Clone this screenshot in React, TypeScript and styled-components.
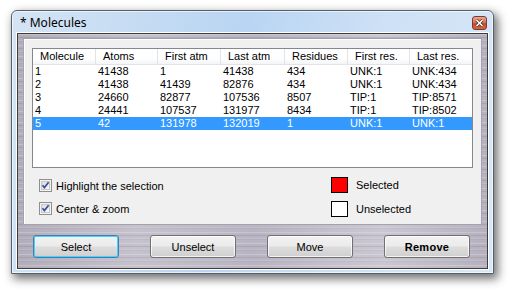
import React from 'react';
import styled, { createGlobalStyle, css } from 'styled-components';

const GlobalStyle = createGlobalStyle`
  html, body {
    margin: 0;
    padding: 0;
    background: #ffffff;
  }
  body {
    font-family: "Liberation Sans", Arial, sans-serif;
    font-size: 11px;
    color: #000;
  }
`;

const Stage = styled.div`
  width: 509px;
  height: 290px;
  padding: 10px 0 0 11px;
  box-sizing: border-box;
  overflow: hidden;
`;

const Window = styled.div`
  width: 483px;
  height: 264px;
  box-sizing: border-box;
  border: 1px solid #55606c;
  border-radius: 6px 6px 0 0;
  background: linear-gradient(100deg, #d4e4f5 0%, #c3daf2 28%, #b9d5f3 45%, #cde0f5 70%, #d8e7f7 100%);
  box-shadow: 3px 4px 10px 1px rgba(0, 0, 0, 0.55), inset 0 0 0 1px rgba(255, 255, 255, 0.6);
  padding: 0 5px 4px 5px;
  display: flex;
  flex-direction: column;
`;

const TitleBar = styled.div`
  height: 22px;
  display: flex;
  align-items: center;
  justify-content: space-between;
  padding: 0 1px 0 3px;
`;

const Title = styled.span`
  font-family: "Noto Sans", "Open Sans", sans-serif;
  font-size: 12px;
  color: #000;
  margin-top: 1px;
`;

const CloseButton = styled.div`
  width: 15px;
  height: 14px;
  margin-top: 2px;
  box-sizing: border-box;
  border: 1px solid #7a3c30;
  border-radius: 3px;
  background: linear-gradient(180deg, #eaa48f 0%, #d8765c 45%, #c24a2c 55%, #d2693f 100%);
  display: flex;
  align-items: center;
  justify-content: center;
`;

// brushed metal client area
const ClientEdge = styled.div`
  flex: 1;
  border: 1px solid #3c3c3c;
  box-shadow: 0 0 0 1px #ffffff;
  background:
    repeating-linear-gradient(180deg, rgba(255,255,255,0.22) 0 1px, transparent 1px 3px, rgba(60,50,80,0.12) 3px 4px, transparent 4px 6px, rgba(255,255,255,0.12) 6px 7px, rgba(70,60,90,0.06) 7px 8px, transparent 8px 11px),
    linear-gradient(90deg, #b1adba 0%, #c6c2cd 25%, #b8b4c2 50%, #cbc7d2 78%, #b5b1be 100%);
  padding: 4px 5px 0 5px;
  display: flex;
  flex-direction: column;
`;

const GroupPanel = styled.div`
  height: 187px;
  box-sizing: border-box;
  background: #f0f0f0;
  border: 1px solid #a4a2aa;
  box-shadow: inset 1px 1px 0 #ffffff;
  padding: 9px 8px 0 8px;
  display: flex;
  flex-direction: column;
`;

const ListBox = styled.div`
  height: 120px;
  box-sizing: border-box;
  background: #ffffff;
  border: 1px solid #828790;
`;

const gridCols = css`
  display: grid;
  grid-template-columns: 63px 62px 63px 64px 63px 62px 1fr;
`;

const HeaderRow = styled.div`
  ${gridCols};
  height: 16px;
  box-sizing: border-box;
  border-bottom: 1px solid #e2e3e6;
  background: linear-gradient(180deg, #ffffff 0%, #ffffff 60%, #f4f5f7 100%);
`;

const HeaderCell = styled.div`
  padding-left: 7px;
  line-height: 15px;
  border-right: 1px solid #e2e3e6;
  white-space: nowrap;
  overflow: hidden;
  &:last-child {
    border-right: none;
  }
`;

const DataRow = styled.div<{ $selected?: boolean }>`
  ${gridCols};
  height: 13px;
  line-height: 13px;
  background: ${(p) => (p.$selected ? '#3399ff' : 'transparent')};
  color: ${(p) => (p.$selected ? '#ffffff' : '#000000')};
  &:first-of-type {
    margin-top: 1px;
  }
`;

const DataCell = styled.div`
  padding-left: 2px;
  white-space: nowrap;
  overflow: hidden;
`;

const Options = styled.div`
  display: flex;
  padding: 9px 0 0 7px;
`;

const CheckColumn = styled.div`
  width: 292px;
  display: flex;
  flex-direction: column;
  gap: 10px;
  padding-top: 2px;
`;

const CheckRow = styled.label`
  display: flex;
  align-items: center;
  gap: 4px;
  height: 13px;
`;

const Legend = styled.div`
  display: flex;
  flex-direction: column;
  gap: 8px;
`;

const LegendRow = styled.div`
  display: flex;
  align-items: center;
  gap: 8px;
`;

const Swatch = styled.div<{ $color: string }>`
  width: 17px;
  height: 16px;
  box-sizing: border-box;
  border: 1px solid #000;
  background: ${(p) => p.$color};
`;

const ButtonRow = styled.div`
  display: flex;
  gap: 31px;
  padding: 10px 0 0 10px;
`;

const Button = styled.button<{ $default?: boolean; $bold?: boolean }>`
  width: 86px;
  height: 23px;
  box-sizing: border-box;
  font-family: "Liberation Sans", Arial, sans-serif;
  font-size: 11px;
  font-weight: ${(p) => (p.$bold ? 700 : 400)};
  color: #000;
  border-radius: 3px;
  border: 1px solid ${(p) => (p.$default ? '#3c7fb1' : '#707070')};
  background: linear-gradient(180deg, #f2f2f2 0%, #ebebeb 48%, #dddddd 52%, #cfcfcf 100%);
  box-shadow: inset 0 0 0 1px ${(p) => (p.$default ? '#48d2ff' : 'rgba(255,255,255,0.75)')};
  padding: 0;
  letter-spacing: ${(p) => (p.$bold ? '0.3px' : '0')};
`;

const CheckBox = () => (
  <svg width="13" height="13" viewBox="0 0 13 13">
    <defs>
      <linearGradient id="cbg" x1="0" y1="0" x2="1" y2="1">
        <stop offset="0" stopColor="#dcdcdc" />
        <stop offset="1" stopColor="#fbfbfb" />
      </linearGradient>
    </defs>
    <rect x="0.5" y="0.5" width="12" height="12" fill="#f4f4f4" stroke="#8e8f8f" />
    <rect x="2.5" y="2.5" width="8" height="8" fill="url(#cbg)" stroke="#c8c8c8" />
    <path d="M3.5 6.2 L5.4 8.6 L9.6 3.2" fill="none" stroke="#3a4fa0" strokeWidth="1.7" />
  </svg>
);

const columns = ['Molecule', 'Atoms', 'First atm', 'Last atm', 'Residues', 'First res.', 'Last res.'];

const rows = [
  ['1', '41438', '1', '41438', '434', 'UNK:1', 'UNK:434'],
  ['2', '41438', '41439', '82876', '434', 'UNK:1', 'UNK:434'],
  ['3', '24660', '82877', '107536', '8507', 'TIP:1', 'TIP:8571'],
  ['4', '24441', '107537', '131977', '8434', 'TIP:1', 'TIP:8502'],
  ['5', '42', '131978', '132019', '1', 'UNK:1', 'UNK:1'],
];

const selectedRow = 4;

export default function App() {
  return (
    <>
      <GlobalStyle />
      <Stage>
        <Window>
          <TitleBar>
            <Title>* Molecules</Title>
            <CloseButton>
              <svg width="9" height="8" viewBox="0 0 9 8">
                <path d="M1.5 1 L7.5 7 M7.5 1 L1.5 7" stroke="#4a2a20" strokeWidth="3" />
                <path d="M1.5 1 L7.5 7 M7.5 1 L1.5 7" stroke="#ffffff" strokeWidth="1.6" />
              </svg>
            </CloseButton>
          </TitleBar>
          <ClientEdge>
            <GroupPanel>
              <ListBox>
                <HeaderRow>
                  {columns.map((c) => (
                    <HeaderCell key={c}>{c}</HeaderCell>
                  ))}
                </HeaderRow>
                {rows.map((r, i) => (
                  <DataRow key={i} $selected={i === selectedRow}>
                    {r.map((v, j) => (
                      <DataCell key={j}>{v}</DataCell>
                    ))}
                  </DataRow>
                ))}
              </ListBox>
              <Options>
                <CheckColumn>
                  <CheckRow>
                    <CheckBox />
                    Highlight the selection
                  </CheckRow>
                  <CheckRow>
                    <CheckBox />
                    Center &amp; zoom
                  </CheckRow>
                </CheckColumn>
                <Legend>
                  <LegendRow>
                    <Swatch $color="#ff0000" />
                    Selected
                  </LegendRow>
                  <LegendRow>
                    <Swatch $color="#ffffff" />
                    Unselected
                  </LegendRow>
                </Legend>
              </Options>
            </GroupPanel>
            <ButtonRow>
              <Button $default>Select</Button>
              <Button>Unselect</Button>
              <Button>Move</Button>
              <Button $bold>Remove</Button>
            </ButtonRow>
          </ClientEdge>
        </Window>
      </Stage>
    </>
  );
}
